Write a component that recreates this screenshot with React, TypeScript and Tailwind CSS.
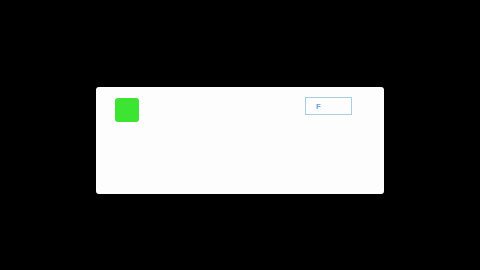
export default function App() {
  return (
    <div className="w-[480px] h-[270px] bg-black flex justify-center pt-[87px]">
      <div className="w-[288px] h-[107px] bg-[#fdfdfd] rounded-[3px] flex items-start justify-between pl-[19px] pr-[32px] pt-[10px]">
        <div className="mt-px w-[24px] h-[24px] rounded-[3px] bg-[#3de532]" />
        <div className="w-[47px] h-[18px] border border-[#a7cfe0] flex items-center pl-[10px] pt-[2px]">
          <span className="text-[7.5px] font-bold text-[#5fa4e6] leading-none" style={{ fontFamily: '"Liberation Sans", Arial, sans-serif' }}>
            F
          </span>
        </div>
      </div>
    </div>
  )
}
